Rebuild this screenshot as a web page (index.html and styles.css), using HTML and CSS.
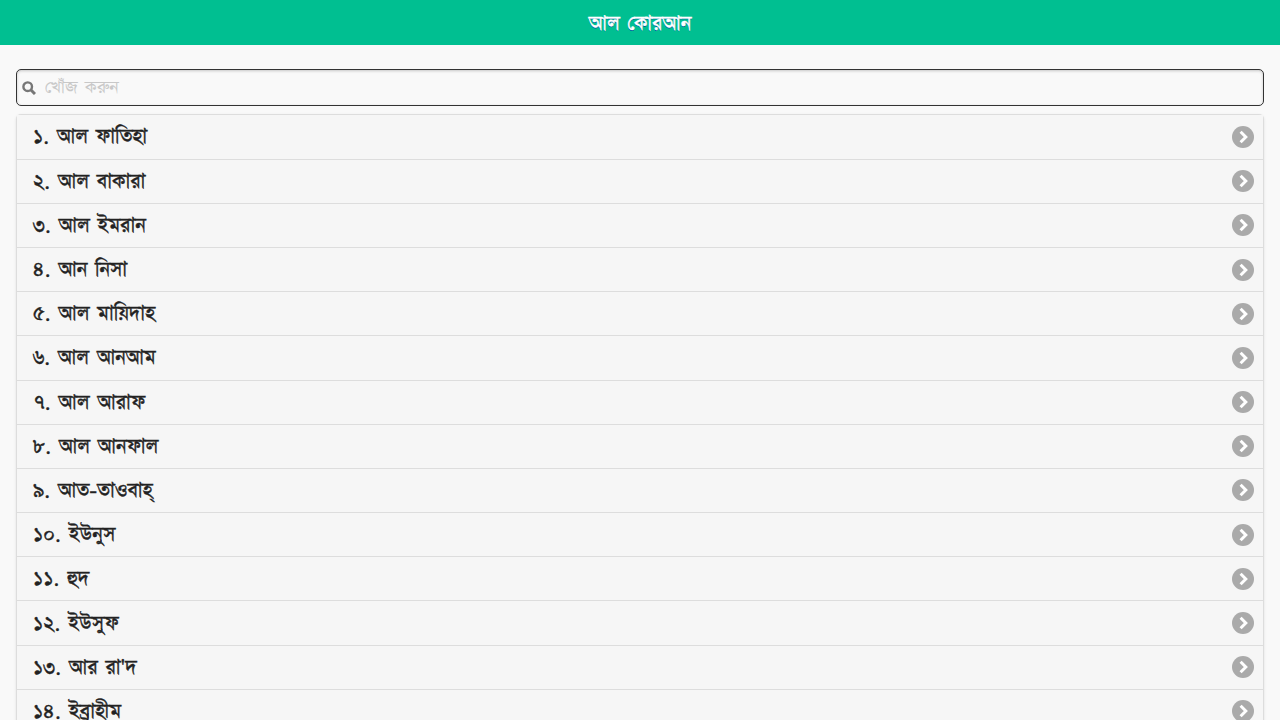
FILE: index.html
```html
<!DOCTYPE html>
<html lang="bn">
<head>
<meta charset="utf-8">
<title>আল কোরআন</title>
<link rel="stylesheet" href="styles.css">
</head>
<body>
<header class="bar"><h1 class="title">আল কোরআন</h1></header>
<main class="content">
<form class="search">
<svg class="search-icon" viewBox="0 0 14 14"><circle cx="5.7" cy="5.7" r="4.3" fill="none" stroke="#777" stroke-width="2.4"/><path d="M9 9l4 4" stroke="#777" stroke-width="3"/></svg>
<input class="search-input" placeholder="খোঁজ করুন">
</form>
<ul class="list">
<li class="row"><span class="name">১. আল ফাতিহা</span><svg class="chev" viewBox="0 0 22 22"><circle cx="11" cy="11" r="11" fill="#aaa"/><path d="M8.6 5.8L13.8 11l-5.2 5.2" fill="none" stroke="#fff" stroke-width="3"/></svg></li>
<li class="row"><span class="name">২. আল বাকারা</span><svg class="chev" viewBox="0 0 22 22"><circle cx="11" cy="11" r="11" fill="#aaa"/><path d="M8.6 5.8L13.8 11l-5.2 5.2" fill="none" stroke="#fff" stroke-width="3"/></svg></li>
<li class="row"><span class="name">৩. আল ইমরান</span><svg class="chev" viewBox="0 0 22 22"><circle cx="11" cy="11" r="11" fill="#aaa"/><path d="M8.6 5.8L13.8 11l-5.2 5.2" fill="none" stroke="#fff" stroke-width="3"/></svg></li>
<li class="row"><span class="name">৪. আন নিসা</span><svg class="chev" viewBox="0 0 22 22"><circle cx="11" cy="11" r="11" fill="#aaa"/><path d="M8.6 5.8L13.8 11l-5.2 5.2" fill="none" stroke="#fff" stroke-width="3"/></svg></li>
<li class="row"><span class="name">৫. আল মায়িদাহ</span><svg class="chev" viewBox="0 0 22 22"><circle cx="11" cy="11" r="11" fill="#aaa"/><path d="M8.6 5.8L13.8 11l-5.2 5.2" fill="none" stroke="#fff" stroke-width="3"/></svg></li>
<li class="row"><span class="name">৬. আল আনআম</span><svg class="chev" viewBox="0 0 22 22"><circle cx="11" cy="11" r="11" fill="#aaa"/><path d="M8.6 5.8L13.8 11l-5.2 5.2" fill="none" stroke="#fff" stroke-width="3"/></svg></li>
<li class="row"><span class="name">৭. আল আরাফ</span><svg class="chev" viewBox="0 0 22 22"><circle cx="11" cy="11" r="11" fill="#aaa"/><path d="M8.6 5.8L13.8 11l-5.2 5.2" fill="none" stroke="#fff" stroke-width="3"/></svg></li>
<li class="row"><span class="name">৮. আল আনফাল</span><svg class="chev" viewBox="0 0 22 22"><circle cx="11" cy="11" r="11" fill="#aaa"/><path d="M8.6 5.8L13.8 11l-5.2 5.2" fill="none" stroke="#fff" stroke-width="3"/></svg></li>
<li class="row"><span class="name">৯. আত-তাওবাহ্</span><svg class="chev" viewBox="0 0 22 22"><circle cx="11" cy="11" r="11" fill="#aaa"/><path d="M8.6 5.8L13.8 11l-5.2 5.2" fill="none" stroke="#fff" stroke-width="3"/></svg></li>
<li class="row"><span class="name">১০. ইউনুস</span><svg class="chev" viewBox="0 0 22 22"><circle cx="11" cy="11" r="11" fill="#aaa"/><path d="M8.6 5.8L13.8 11l-5.2 5.2" fill="none" stroke="#fff" stroke-width="3"/></svg></li>
<li class="row"><span class="name">১১. হুদ</span><svg class="chev" viewBox="0 0 22 22"><circle cx="11" cy="11" r="11" fill="#aaa"/><path d="M8.6 5.8L13.8 11l-5.2 5.2" fill="none" stroke="#fff" stroke-width="3"/></svg></li>
<li class="row"><span class="name">১২. ইউসুফ</span><svg class="chev" viewBox="0 0 22 22"><circle cx="11" cy="11" r="11" fill="#aaa"/><path d="M8.6 5.8L13.8 11l-5.2 5.2" fill="none" stroke="#fff" stroke-width="3"/></svg></li>
<li class="row"><span class="name">১৩. আর রা'দ</span><svg class="chev" viewBox="0 0 22 22"><circle cx="11" cy="11" r="11" fill="#aaa"/><path d="M8.6 5.8L13.8 11l-5.2 5.2" fill="none" stroke="#fff" stroke-width="3"/></svg></li>
<li class="row"><span class="name">১৪. ইব্রাহীম</span><svg class="chev" viewBox="0 0 22 22"><circle cx="11" cy="11" r="11" fill="#aaa"/><path d="M8.6 5.8L13.8 11l-5.2 5.2" fill="none" stroke="#fff" stroke-width="3"/></svg></li>
</ul>
</main>
</body>
</html>
```
FILE: styles.css
```css
html,body{margin:0;padding:0;height:720px;overflow:hidden;background:#f9f9f9;font-family:FreeSerif,"Noto Sans",sans-serif;}
.bar{height:45px;background:#00bf91;display:flex;align-items:center;justify-content:center;}
.title{margin:0;padding-top:2px;font:400 23.5px FreeSerif,"Noto Sans",sans-serif;word-spacing:2px;color:#fff;-webkit-text-stroke:.4px #fff;text-shadow:0 1px 0 #059;}
.content{padding:24px 16px 0;}
.search{height:37px;box-sizing:border-box;border:1px solid #333;border-radius:5px;background:#f9f9f9;display:flex;align-items:center;padding-left:5px;box-shadow:inset 0 1px 3px rgba(0,0,0,.2);}
.search-icon{width:14px;height:14px;flex:none;}
.search-input{flex:1;min-width:0;border:0;padding:0;background:none;outline:0;font:400 21px FreeSerif,"Noto Sans",sans-serif;word-spacing:2px;margin-left:9px;color:#333;}
.search-input::placeholder{color:#c8c8c8;opacity:1;}
.list{list-style:none;margin:8px 0 0;padding:.4px 0 0;border:1px solid #ddd;border-bottom:0;border-radius:5px;background:#f6f6f6;box-shadow:0 1px 3px rgba(0,0,0,.1);}
.row{height:44.2px;box-sizing:border-box;border-bottom:1px solid #ddd;background:#f6f6f6;display:flex;align-items:center;justify-content:space-between;padding:0 9px 0 16px;font-size:23.5px;font-weight:400;word-spacing:2px;color:#222;}
.name{padding-top:1px;-webkit-text-stroke:.4px #222;}
.chev{width:22px;height:22px;flex:none;}
```
